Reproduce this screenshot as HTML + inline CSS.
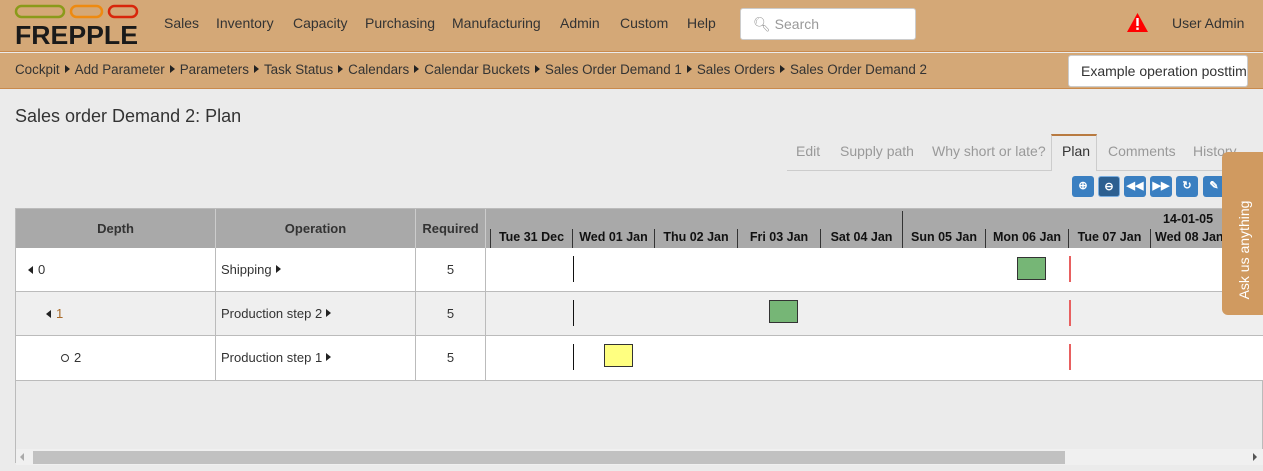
<!DOCTYPE html>
<html><head><style>
*{box-sizing:border-box;margin:0;padding:0}
body{width:1263px;height:471px;overflow:hidden;background:#ebebeb;font-family:"Liberation Sans",sans-serif;color:#333;position:relative}
.a{position:absolute}
.nav{top:0;left:0;width:1263px;height:52px;background:#d4a877;border-bottom:1px solid #c98a4d}
.bc{top:53px;left:0;width:1263px;height:36px;background:#d4a877;border-bottom:1px solid #c98a4d;font-size:14px;color:#333}
.menu span{position:absolute;top:15px;font-size:14px;color:#333}
.tri{display:inline-block;width:0;height:0;border-top:4px solid transparent;border-bottom:4px solid transparent;border-left:5px solid #222;margin:0 5px 1px 5px}
.tril{display:inline-block;width:0;height:0;border-top:4px solid transparent;border-bottom:4px solid transparent;border-right:5px solid #222;margin-right:5px}
.tab{position:absolute;top:143px;font-size:14px;color:#999}
.btn{position:absolute;top:176px;width:22px;height:21px;background:#3a7fc1;border-radius:3px;color:#fff;font-size:11px;text-align:center;line-height:21px;font-weight:bold}
.cell{position:absolute;font-size:13px;color:#333}
.day{position:absolute;top:229px;height:19px;border-left:1px solid #333;font-size:12.5px;font-weight:bold;color:#111;text-align:center;line-height:17px}
.red{position:absolute;left:1069px;width:2px;height:26px;background:#e86060}
</style></head><body>
<div class="a nav"></div>
<svg class="a" style="left:14px;top:4px" width="126" height="42">
<rect x="2" y="2" width="48" height="11" rx="5.5" fill="none" stroke="#8a9a1a" stroke-width="2.5"/>
<rect x="57" y="2" width="31" height="11" rx="5.5" fill="none" stroke="#ee8a10" stroke-width="2.5"/>
<rect x="95" y="2" width="28" height="11" rx="5.5" fill="none" stroke="#d8260a" stroke-width="2.5"/>
<text x="1" y="40" font-family="Liberation Sans" font-weight="bold" font-size="26" fill="#1a1a1a" textLength="123" lengthAdjust="spacingAndGlyphs">FREPPLE</text>
</svg>
<div class="menu"><span style="left:164px">Sales</span><span style="left:216px">Inventory</span><span style="left:293px">Capacity</span><span style="left:365px">Purchasing</span><span style="left:452px">Manufacturing</span><span style="left:560px">Admin</span><span style="left:620px">Custom</span><span style="left:687px">Help</span></div>
<div class="a" style="left:740px;top:8px;width:176px;height:32px;background:#fff;border:1px solid #ccc;border-radius:3px;font-size:14px;color:#999;padding:7px 0 0 12px">&#x1F50D;&#xFE0E; Search</div>
<svg class="a" style="left:1127px;top:13px" width="21" height="19"><polygon points="10.5,0 21,19 0,19" fill="#f00"/><rect x="9.3" y="5" width="2.4" height="8" fill="#fff"/><rect x="9.3" y="14.5" width="2.4" height="2.4" fill="#fff"/></svg>
<div class="a" style="left:1172px;top:15px;font-size:14px">User Admin</div>
<div class="a bc"></div>
<div class="a" style="left:15px;top:62px;font-size:13.4px;white-space:nowrap">Cockpit<span class="tri"></span>Add Parameter<span class="tri"></span>Parameters<span class="tri"></span>Task Status<span class="tri"></span>Calendars<span class="tri"></span>Calendar Buckets<span class="tri"></span>Sales Order Demand 1<span class="tri"></span>Sales Orders<span class="tri"></span>Sales Order Demand 2</div>
<div class="a" style="left:1068px;top:55px;width:180px;height:32px;background:#fff;border:1px solid #ccc;border-radius:3px;font-size:14px;padding:7px 0 0 12px;white-space:nowrap;overflow:hidden">Example operation posttime</div>
<div class="a" style="left:15px;top:106px;font-size:18px;color:#333">Sales order Demand 2: Plan</div>
<div class="a" style="left:787px;top:170px;width:476px;height:1px;background:#ccc"></div>
<div class="tab" style="left:796px">Edit</div><div class="tab" style="left:840px">Supply path</div><div class="tab" style="left:932px">Why short or late?</div>
<div class="a" style="left:1051px;top:134px;width:46px;height:37px;border-top:2px solid #b87a40;border-left:1px solid #ccc;border-right:1px solid #ccc;background:#ebebeb"></div>
<div class="tab" style="left:1062px;color:#333">Plan</div><div class="tab" style="left:1108px">Comments</div><div class="tab" style="left:1193px">History</div>
<div class="btn" style="left:1072px">⊕</div><div class="btn" style="left:1098px;background:#2c5f90;border:1px solid #7aaee0">⊖</div><div class="btn" style="left:1124px">◀◀</div><div class="btn" style="left:1150px">▶▶</div><div class="btn" style="left:1176px">↻</div><div class="btn" style="left:1203px">✎</div>
<div class="a" style="left:15px;top:208px;width:1248px;height:255px;border:1px solid #bbb;background:#ebebeb"></div>
<div class="a" style="left:16px;top:209px;width:1247px;height:39px;background:#a9a9a9"></div>
<div class="a" style="left:215px;top:209px;width:1px;height:39px;background:#ccc"></div>
<div class="a" style="left:415px;top:209px;width:1px;height:39px;background:#ccc"></div>
<div class="a" style="left:485px;top:209px;width:1px;height:39px;background:#ccc"></div>
<div class="cell" style="left:16px;top:221px;width:199px;text-align:center;font-weight:bold">Depth</div>
<div class="cell" style="left:216px;top:221px;width:199px;text-align:center;font-weight:bold">Operation</div>
<div class="cell" style="left:416px;top:221px;width:69px;text-align:center;font-weight:bold">Required</div>
<div class="a" style="left:902px;top:211px;width:1px;height:18px;background:#333"></div>
<div class="a" style="left:1163px;top:212px;font-size:12.5px;font-weight:bold;color:#111">14-01-05</div>
<div class="day" style="left:490px;width:82px">Tue 31 Dec</div><div class="day" style="left:572px;width:82px">Wed 01 Jan</div><div class="day" style="left:654px;width:83px">Thu 02 Jan</div><div class="day" style="left:737px;width:83px">Fri 03 Jan</div><div class="day" style="left:820px;width:82px">Sat 04 Jan</div><div class="day" style="left:902px;width:83px">Sun 05 Jan</div><div class="day" style="left:985px;width:83px">Mon 06 Jan</div><div class="day" style="left:1068px;width:82px">Tue 07 Jan</div><div class="day" style="left:1150px;width:82px;text-align:left;padding-left:4px;overflow:hidden">Wed 08 Jan</div>
<div class="a" style="left:16px;top:248px;width:1247px;height:44px;background:#fff;border-bottom:1px solid #bbb"></div>
<div class="a" style="left:16px;top:292px;width:1247px;height:44px;background:#efefef;border-bottom:1px solid #bbb"></div>
<div class="a" style="left:16px;top:336px;width:1247px;height:45px;background:#fff;border-bottom:1px solid #bbb"></div>
<div class="a" style="left:215px;top:248px;width:1px;height:132px;background:#bbb"></div>
<div class="a" style="left:415px;top:248px;width:1px;height:132px;background:#bbb"></div>
<div class="a" style="left:485px;top:248px;width:1px;height:132px;background:#bbb"></div>
<div class="cell" style="left:28px;top:262px"><span class="tril"></span>0</div>
<div class="cell" style="left:46px;top:306px;color:#a86a2a"><span class="tril"></span>1</div>
<div class="cell" style="left:61px;top:350px"><span style="display:inline-block;width:8px;height:8px;border:1px solid #333;border-radius:50%;margin-right:5px"></span>2</div>
<div class="cell" style="left:221px;top:262px">Shipping<span class="tri" style="margin-left:4px"></span></div>
<div class="cell" style="left:221px;top:306px">Production step 2<span class="tri" style="margin-left:4px"></span></div>
<div class="cell" style="left:221px;top:350px">Production step 1<span class="tri" style="margin-left:4px"></span></div>
<div class="cell" style="left:416px;top:262px;width:69px;text-align:center">5</div>
<div class="cell" style="left:416px;top:306px;width:69px;text-align:center">5</div>
<div class="cell" style="left:416px;top:350px;width:69px;text-align:center">5</div>
<div class="a" style="left:573px;top:256px;width:1px;height:26px;background:#111"></div>
<div class="a" style="left:573px;top:300px;width:1px;height:26px;background:#111"></div>
<div class="a" style="left:573px;top:344px;width:1px;height:26px;background:#111"></div>
<div class="red" style="top:256px"></div>
<div class="red" style="top:300px"></div>
<div class="red" style="top:344px"></div>
<div class="a" style="left:1017px;top:257px;width:29px;height:23px;background:#76b676;border:1px solid #333"></div>
<div class="a" style="left:769px;top:300px;width:29px;height:23px;background:#76b676;border:1px solid #333"></div>
<div class="a" style="left:604px;top:344px;width:29px;height:23px;background:#ffff80;border:1px solid #333"></div>
<div class="a" style="left:16px;top:449px;width:1247px;height:16px;background:#f0f0f0"></div>
<div class="a" style="left:33px;top:451px;width:1032px;height:13px;background:#c1c1c1"></div>
<div class="a" style="left:20px;top:453px;width:0;height:0;border-top:4px solid transparent;border-bottom:4px solid transparent;border-right:4px solid #aaa"></div>
<div class="a" style="left:1253px;top:453px;width:0;height:0;border-top:4px solid transparent;border-bottom:4px solid transparent;border-left:4px solid #555"></div>
<div class="a" style="left:1222px;top:152px;width:45px;height:163px;background:#d09a60;border-radius:6px 0 0 6px"></div>
<div class="a" style="left:1171px;top:240px;width:150px;height:20px;transform:rotate(-90deg);color:#fff;font-size:14px;text-align:center">Ask us anything</div>
</body></html>
